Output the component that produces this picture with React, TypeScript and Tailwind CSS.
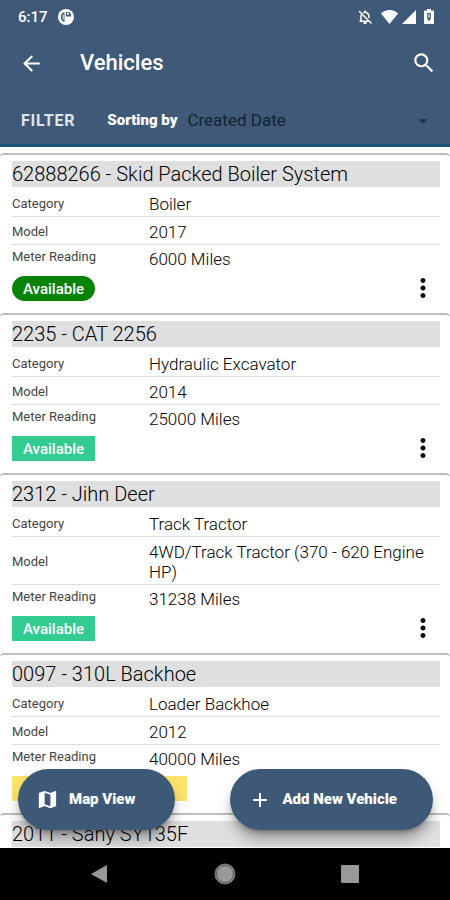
import React, { useState } from 'react';
import { MdArrowBack, MdSearch, MdMoreVert, MdAdd, MdMap, MdArrowDropDown } from 'react-icons/md';

interface Vehicle {
  id: string;
  title: string;
  category?: string;
  model?: string;
  meter?: string;
  badge?: string;
  badgeClass?: string;
}

const vehicles: Vehicle[] = [
  {
    id: 'boiler',
    title: '62888266 - Skid Packed Boiler System',
    category: 'Boiler',
    model: '2017',
    meter: '6000 Miles',
    badge: 'Available',
    badgeClass: 'rounded-full bg-[#078407]',
  },
  {
    id: 'cat',
    title: '2235 - CAT 2256',
    category: 'Hydraulic Excavator',
    model: '2014',
    meter: '25000 Miles',
    badge: 'Available',
    badgeClass: 'bg-[#32cc91]',
  },
  {
    id: 'jihn',
    title: '2312 - Jihn Deer',
    category: 'Track Tractor',
    model: '4WD/Track Tractor (370 - 620 Engine HP)',
    meter: '31238 Miles',
    badge: 'Available',
    badgeClass: 'bg-[#32cc91]',
  },
  {
    id: 'backhoe',
    title: '0097 - 310L Backhoe',
    category: 'Loader Backhoe',
    model: '2012',
    meter: '40000 Miles',
    badgeClass: 'w-[175px] bg-[#fbe36a]',
  },
  { id: 'sany', title: '2011 - Sany SY135F' },
];

function StatusBar() {
  return (
    <div className="flex h-[33px] items-center justify-between pl-[18px] pr-4">
      <div className="flex items-center gap-3">
        <span className="text-[15px] font-medium leading-5">6:17</span>
        <svg className="-ml-0.5" width="16" height="16" viewBox="0 0 16 16">
          <circle cx="8" cy="8" r="8" fill="#fff" />
          <path d="M6.500 3v10C4 12.500 2.800 10.500 2.800 8S4 3.500 6.500 3z" fill="#3f5a78" />
          <path d="M4.600 5.500h1v5h-1z" fill="#fff" />
          <path d="M8 3h3.200c1.200.9 2 2.500 2 4.500H8z" fill="#3f5a78" />
          <path d="M9 3.500h1.800v2.200H9z" fill="#fff" />
        </svg>
      </div>
      <div className="flex items-center gap-1">
        {/* muted bell */}
        <svg className="mr-1" width="16" height="16" viewBox="0 0 16 16" fill="none" stroke="#fff">
          <path d="M4 12V7.500a4 4 0 0 1 .8-2.400M6.200 3.800A4 4 0 0 1 12 7.500V9M2.500 12.200h9.500" strokeWidth="1.500" />
          <path d="M8 1.500v2M2 2l12.500 12.500" strokeWidth="1.500" />
          <path d="M6.500 14h3" strokeWidth="2" />
        </svg>
        <svg width="17" height="14" viewBox="0 0 17 14">
          <path d="M0 3.500C2.200 1.200 5.200 0 8.500 0S14.800 1.200 17 3.500L8.500 14z" fill="#fff" />
        </svg>
        <svg width="14" height="14" viewBox="0 0 14 14">
          <path d="M14 0v14H0z" fill="#fff" />
        </svg>
        <svg className="ml-1" width="10" height="15" viewBox="0 0 10 15">
          <path d="M3 0h4v1.500h2q1 0 1 1V14q0 1-1 1H1q-1 0-1-1V2.500q0-1 1-1h2z" fill="#fff" />
          <path d="M3.200 4h3.600v5.500L5 12.500 3.200 9.500z" fill="#3f5a78" />
          <path d="M4.500 5h1v4h-1z" fill="#fff" />
        </svg>
      </div>
    </div>
  );
}

function VehicleCard({ vehicle }: { vehicle: Vehicle }) {
  return (
    <li className="rounded-sm border-t-2 border-[#bdbdbd] pb-3 pl-3 pr-2.5 pt-1.5">
      <h2 className="mb-0.5 h-[26px] bg-[#dfdfdf] text-[20px] font-light leading-[26px] text-black">{vehicle.title}</h2>
      {vehicle.category && (
        <>
          <dl className="text-[17px] font-light leading-5 text-black">
            <div className="flex items-center border-b border-[#dcdcdc] pb-[2px] pt-[5px]">
              <dt className="w-[137px] shrink-0 text-[13px] font-normal text-[#444]">Category</dt>
              <dd>{vehicle.category}</dd>
            </div>
            <div className="flex items-center border-b border-[#dcdcdc] pb-[2px] pt-[5px]">
              <dt className="w-[137px] shrink-0 text-[13px] font-normal text-[#444]">Model</dt>
              <dd>{vehicle.model}</dd>
            </div>
            <div className="flex items-start py-1">
              <dt className="w-[137px] shrink-0 text-[13px] font-normal leading-4 text-[#444]">Meter Reading</dt>
              <dd>{vehicle.meter}</dd>
            </div>
          </dl>
          <div className="flex h-7 items-end justify-between">
            <span className={`inline-block h-[25px] px-[11px] text-[15px] font-medium leading-[26px] text-white ${vehicle.badgeClass}`}>
              {vehicle.badge}
            </span>
            <button type="button" aria-label="Vehicle actions" className="-mb-0.5 mr-0.5 text-black">
              <MdMoreVert size={30} />
            </button>
          </div>
        </>
      )}
    </li>
  );
}

export default function App() {
  const [sort, setSort] = useState('Created Date');

  return (
    <div className="flex h-screen flex-col overflow-hidden bg-white font-['Roboto',sans-serif]">
      <header className="shrink-0 border-b-[3px] border-[#1c5278] bg-[#3f5a78] text-white">
        <StatusBar />
        <div className="flex h-[60px] items-center pl-[19px] pr-[13px]">
          <button type="button" aria-label="Back">
            <MdArrowBack size={25} />
          </button>
          <h1 className="ml-9 flex-1 text-[22px] font-medium leading-7">Vehicles</h1>
          <button type="button" aria-label="Search">
            <MdSearch size={26} />
          </button>
        </div>
        <div className="flex h-[51px] items-center pl-[21px] pr-4 pt-1">
          <button type="button" className="text-[16px] font-bold tracking-wider text-[#dfe4e9]">
            FILTER
          </button>
          <label htmlFor="sort" className="ml-8 text-[15px] font-black">
            Sorting by
          </label>
          <div className="relative ml-2.5 flex-1">
            <select
              id="sort"
              value={sort}
              onChange={(e) => setSort(e.target.value)}
              className="w-full appearance-none bg-transparent text-[17px] text-[#15232f] outline-none"
            >
              <option>Created Date</option>
              <option>Name</option>
              <option>Category</option>
            </select>
            <MdArrowDropDown size={22} className="pointer-events-none absolute right-0 top-0.5 text-[#163446]" />
          </div>
        </div>
      </header>

      <main className="relative min-h-0 flex-1">
        <ul className="h-full overflow-hidden pt-1.5">
          {vehicles.map((v) => (
            <VehicleCard key={v.id} vehicle={v} />
          ))}
        </ul>

        {/* Floating actions over the list */}
        <div className="absolute inset-x-0 bottom-[18px] flex justify-between pl-[18px] pr-[17px]">
          <button
            type="button"
            className="flex h-[61px] items-center gap-2.5 rounded-full bg-[#3d5977] pl-[18px] pr-10 text-[15px] font-black text-white shadow-lg shadow-black/40"
          >
            <MdMap size={23} />
            Map View
          </button>
          <button
            type="button"
            className="flex h-[61px] items-center gap-2.5 rounded-full bg-[#3d5977] pl-[18px] pr-9 text-[15px] font-black text-white shadow-lg shadow-black/40"
          >
            <MdAdd size={24} />
            Add New Vehicle
          </button>
        </div>
      </main>

      <nav className="flex h-[52px] shrink-0 items-center justify-around bg-black px-[38px]">
        <button type="button" aria-label="Back">
          <svg width="18" height="20" viewBox="0 0 18 20">
            <path d="M16 1v18L0 10z" fill="#999" />
          </svg>
        </button>
        <button type="button" aria-label="Home">
          <svg width="22" height="22" viewBox="0 0 22 22">
            <circle cx="11" cy="11" r="10" fill="#999" stroke="#777" />
            <circle cx="11" cy="11" r="8.500" fill="none" stroke="#555" />
          </svg>
        </button>
        <button type="button" aria-label="Recent apps">
          <svg width="18" height="18" viewBox="0 0 18 18">
            <rect width="18" height="18" rx="1" fill="#999" />
          </svg>
        </button>
      </nav>
    </div>
  );
}
